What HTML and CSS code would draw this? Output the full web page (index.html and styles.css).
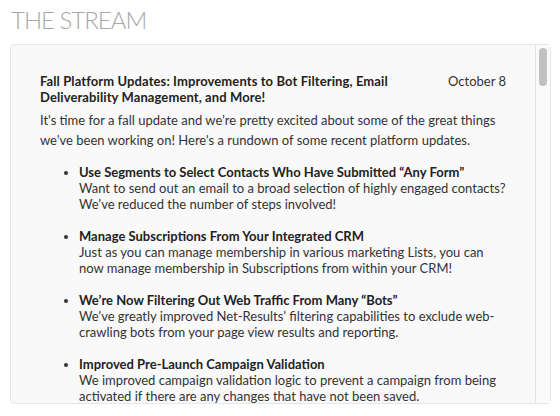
FILE: index.html
```html
<!DOCTYPE html>
<html lang="en">
<head>
  <meta charset="UTF-8">
  <title>The Stream</title>
  <link rel="stylesheet" href="styles.css">
</head>
<body>
  <h2 class="stream-title">The Stream</h2>
  <div class="stream-panel">
    <div class="stream-content">
      <div class="post-header">
        <h3 class="post-title">Fall Platform Updates: Improvements to Bot Filtering, Email Deliverability Management, and More!</h3>
        <span class="post-date">October 8</span>
      </div>
      <p class="post-intro">It's time for a fall update and we’re pretty excited about some of the great things we’ve been working on! Here's a rundown of some recent platform updates.</p>
      <ul class="post-list">
        <li>
          <strong>Use Segments to Select Contacts Who Have Submitted “Any Form”</strong>
          Want to send out an email to a broad selection of highly engaged contacts? We’ve reduced the number of steps involved!
        </li>
        <li>
          <strong>Manage Subscriptions From Your Integrated CRM</strong>
          Just as you can manage membership in various marketing Lists, you can now manage membership in Subscriptions from within your CRM!
        </li>
        <li>
          <strong>We’re Now Filtering Out Web Traffic From Many “Bots”</strong>
          We’ve greatly improved Net-Results’ filtering capabilities to exclude web-crawling bots from your page view results and reporting.
        </li>
        <li>
          <strong>Improved Pre-Launch Campaign Validation</strong>
          We improved campaign validation logic to prevent a campaign from being activated if there are any changes that have not been saved.
        </li>
      </ul>
    </div>
    <div class="stream-rail">
      <div class="stream-thumb"></div>
    </div>
  </div>
</body>
</html>
```

FILE: styles.css
```css
body {
  margin: 0;
  padding: 0 9px 0 10px;
  background-color: #fff;
  font-family: 'Lato', 'Helvetica Neue', sans-serif;
  color: #333;
}
.stream-title {
  margin: 0;
  padding: 6px 0 0 1px;
  height: 44px;
  box-sizing: border-box;
  font-size: 24px;
  font-weight: 300;
  line-height: 28px;
  letter-spacing: -1px;
  text-transform: uppercase;
  color: #a8a8a8;
}
.stream-panel {
  display: flex;
  height: 360px;
  box-sizing: border-box;
  border: 1px solid #e6e6e6;
  border-radius: 4px;
  background-color: #f9f9f9;
  overflow: hidden;
}
.stream-content {
  flex: 1;
  padding: 28px 29px 0 29px;
  overflow: hidden;
  font-size: 13px;
}
.post-header {
  display: flex;
  align-items: flex-start;
}
.post-title {
  flex: 1;
  margin: 0;
  padding-right: 40px;
  font-size: 13px;
  font-weight: 700;
  line-height: 16px;
  letter-spacing: 0.1px;
  color: #222;
}
.post-date {
  line-height: 16px;
  color: #333;
}
.post-intro {
  margin: 5px 0 14px;
  line-height: 20px;
}
.post-list {
  margin: 0;
  padding-left: 39px;
  line-height: 16px;
}
.post-list li {
  margin-bottom: 16px;
}
.post-list strong {
  display: block;
  color: #222;
}
.stream-rail {
  width: 14px;
  border-left: 1px solid #e3e3e3;
  background-color: #fafafa;
}
.stream-thumb {
  margin: 3px 0 0 3px;
  width: 8px;
  height: 38px;
  border-radius: 4px;
  background-color: #c1c1c1;
}
```
